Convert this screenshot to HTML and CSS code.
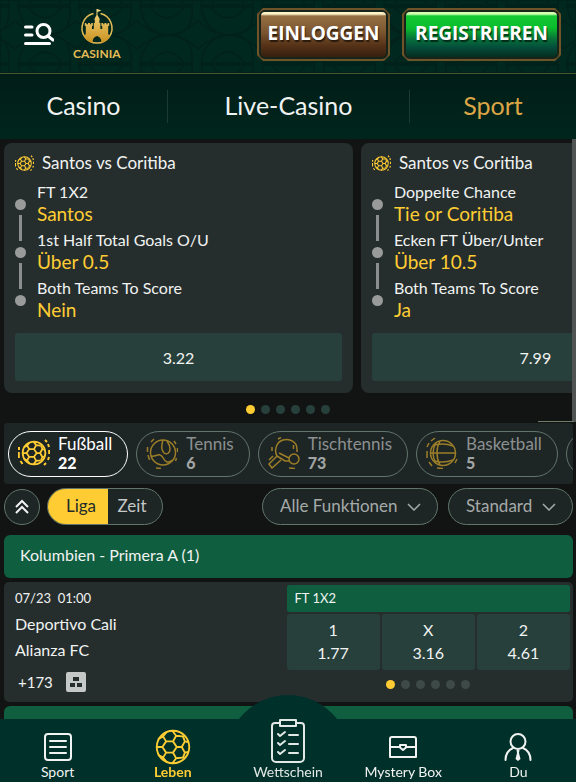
FILE: index.html
```html
<!DOCTYPE html>
<html lang="de">
<head>
  <meta charset="UTF-8" />
  <meta name="viewport" content="width=device-width, initial-scale=1.0"/>
  <title>Casinia Sport</title>
  <link rel="stylesheet" href="styles.css">
</head>
<body>
  <svg class="sprite" aria-hidden="true">
    <symbol id="ball" viewBox="0 0 32 32">
      <circle cx="16" cy="16" r="13"/>
      <path d="M10.5 11.5h5.5l3 4.5-3 4.5h-5.5L7.5 16zM7.5 16H3M10.500 11.500 8 7.500M16 11.500l2.500-4.500M19 16h4M10.500 20.500 8 24.500M16 20.500l2.500 4.500M8 7.500l-3.500 2M8 7.500 11 4M18.500 7 15.500 3M18.500 7l5 .5M8 24.500l-3.500-2M8 24.500l3 3.500M18.500 25l-3 4M18.500 25l5-.5M23 16l2.500-4.500 2.500.5M23 16l2.500 4.500 2.500-.5M25.500 11.500l-1.500-4M25.500 20.500l-1.500 4"/>
    </symbol>
    <symbol id="live-ball" viewBox="0 0 32 32">
      <use href="#ball" x="2" y="2" width="28" height="28"/>
      <path d="M1 10v3M.8 15v6M2.500 24l2 3M27 3l2 2M30 7l1 3M31.200 13v4M31 20l-1 3M28 26l-2 2"/>
    </symbol>
  </svg>

  <header class="header">
    <svg class="pattern" aria-hidden="true">
      <defs>
        <pattern id="arcs" width="61" height="58" patternUnits="userSpaceOnUse" x="137" y="6">
          <path d="M3 1h52q2 28-22 28Q8 29 3 57h52q2-28-22-28Q8 29 3 1zM0 15q30 28 61 0M0 43q30-28 61 0M12 0q18 24 36 0M12 58q18-24 36 0"/>
        </pattern>
      </defs>
      <rect width="100%" height="100%" fill="url(#arcs)"/>
    </svg>
    <button class="menu-btn" aria-label="Menü">
      <svg width="30" height="24" viewBox="0 0 30 24">
        <path d="M1.500 4H8M1.500 12H8M1.500 20.500h24"/>
        <circle cx="19.500" cy="8" r="6.500"/>
        <path d="M24 13l5 4"/>
      </svg>
    </button>
    <a class="logo" href="#">
      <svg width="36" height="36" viewBox="0 0 36 36">
        <defs>
          <linearGradient id="gold" x1="0" y1="0" x2="0" y2="1">
            <stop offset="0" stop-color="#f6d982"/>
            <stop offset="1" stop-color="#c9911f"/>
          </linearGradient>
        </defs>
        <path class="ring" d="M14.500 4.500a15 15 0 1 0 7 0"/>
        <path fill="url(#gold)" d="M17.500 0h.8l4 1.500-3.800 1.500v3l2.500 4.500h-.6V14h1v6h1.800v-3h-.8v-3h1.800v1.300h1.200V14h2v1.300h1.200V14h1.600v3h-1v8l2 2.500a15 15 0 0 1-9 6.500v-2.500q-.5-3.500-4.200-4.500-3.700 1-4.200 4.500V34a15 15 0 0 1-9-6.500l2-2.500v-8h-1v-3h1.600v1.300H9V14h2v1.300h1.200V14h1.600v3h-.8v3h1.800v-6h1v-3.500h-.6L17.500 6z"/>
      </svg>
      <span>CASINIA</span>
    </a>
    <div class="account">
      <button class="btn btn-login"><span>EINLOGGEN</span></button>
      <button class="btn btn-register"><span>REGISTRIEREN</span></button>
    </div>
  </header>

  <nav class="tabs">
    <a href="#">Casino</a>
    <a href="#">Live-Casino</a>
    <a href="#" class="active">Sport</a>
  </nav>

  <main>
    <section class="promo">
      <div class="carousel">
        <article class="card">
          <h2><svg class="icon"><use href="#live-ball"/></svg>Santos vs Coritiba</h2>
          <div class="legs">
            <div class="track"><i></i><b></b><i></i><b></b><i></i></div>
            <dl>
              <dt>FT 1X2</dt><dd>Santos</dd>
              <dt>1st Half Total Goals O/U</dt><dd>Über 0.5</dd>
              <dt>Both Teams To Score</dt><dd>Nein</dd>
            </dl>
          </div>
          <button class="price">3.22</button>
        </article>
        <article class="card">
          <h2><svg class="icon"><use href="#live-ball"/></svg>Santos vs Coritiba</h2>
          <div class="legs">
            <div class="track"><i></i><b></b><i></i><b></b><i></i></div>
            <dl>
              <dt>Doppelte Chance</dt><dd>Tie or Coritiba</dd>
              <dt>Ecken FT Über/Unter</dt><dd>Über 10.5</dd>
              <dt>Both Teams To Score</dt><dd>Ja</dd>
            </dl>
          </div>
          <button class="price">7.99</button>
        </article>
      </div>
      <div class="dots"><i class="on"></i><i></i><i></i><i></i><i></i><i></i></div>
      <div class="scroll-edge"></div>
    </section>

    <div class="sports">
      <button class="chip selected">
        <svg><use href="#live-ball"/></svg>
        <span>Fußball<strong>22</strong></span>
      </button>
      <button class="chip">
        <svg viewBox="0 0 32 32">
          <circle cx="17" cy="15.500" r="12.500"/>
          <path d="M5 19c4 1 6-2 9-1 4 1 3 6 7 7 2 .5 4-1 6-2M17 3c-2 6-2 10 1 13 3 2 6 0 6-4 0-3-1-5-3-8"/>
          <path d="M1.500 10v5M2 18l1.500 5M5 5l3-3M10 31l5 .5M28 4l2 3M31.500 11v4M30.500 21l-1 3"/>
        </svg>
        <span>Tennis<strong>6</strong></span>
      </button>
      <button class="chip">
        <svg viewBox="0 0 32 32">
          <path d="M9 19C6 14 8 5 15 3s14 2 14 9v3M9 19l8 5h4M11 16l10 5M9 19l-8 8 3 4 9-8"/>
          <circle cx="26" cy="22" r="5"/>
          <path d="M4 14v-4M1 23l4-4M10 2l3-1.500M21 31l6 .5M25.500 12V8"/>
        </svg>
        <span>Tischtennis<strong>73</strong></span>
      </button>
      <button class="chip">
        <svg viewBox="0 0 32 32">
          <circle cx="17" cy="16" r="12.500"/>
          <path d="M5 16h24M8 8c8-2 14-1 19 1M8 24c8 2 14 1 19-1M10 6c-4 6-4 14 0 20M14 4c-4 7-4 17 0 24"/>
          <path d="M1 10 3 6M1 14v7M5 4l4-3M3 25l3 4M31 22l-2 4M11 31l6 .5"/>
        </svg>
        <span>Basketball<strong>5</strong></span>
      </button>
      <button class="chip" aria-label="Weitere Sportarten">
        <svg><use href="#ball"/></svg>
      </button>
    </div>

    <div class="filters">
      <button class="collapse" aria-label="Alle einklappen">
        <svg width="16" height="16" viewBox="0 0 16 16"><path d="M2 8l6-6 6 6M2 14l6-6 6 6"/></svg>
      </button>
      <div class="switch">
        <button class="on">Liga</button>
        <button>Zeit</button>
      </div>
      <div class="selects">
        <div class="select">
          <select aria-label="Funktionen"><option>Alle Funktionen</option></select>
          <svg width="14" height="8" viewBox="0 0 14 8"><path d="M1 1l6 6 6-6"/></svg>
        </div>
        <div class="select">
          <select aria-label="Ansicht"><option>Standard</option></select>
          <svg width="14" height="8" viewBox="0 0 14 8"><path d="M1 1l6 6 6-6"/></svg>
        </div>
      </div>
    </div>

    <h3 class="league">Kolumbien - Primera A (1)</h3>
    <article class="match">
      <div class="info">
        <time>07/23&nbsp; 01:00</time>
        <p>Deportivo Cali</p>
        <p>Alianza FC</p>
        <div class="more">
          <a href="#">+173</a>
          <svg width="20" height="20" viewBox="0 0 20 20">
            <rect width="20" height="20" rx="2" fill="#c4c9c8"/>
            <path fill="#252e2d" d="M7 5h6v4H7zM4 11h5v4H4zM11 11h5v4h-5z"/>
          </svg>
        </div>
      </div>
      <div class="market">
        <h4>FT 1X2</h4>
        <div class="odds">
          <button>1<span>1.77</span></button>
          <button>X<span>3.16</span></button>
          <button>2<span>4.61</span></button>
        </div>
        <div class="dots"><i class="on"></i><i></i><i></i><i></i><i></i><i></i></div>
      </div>
    </article>
    <div class="league"></div>
  </main>

  <nav class="bottom-nav">
    <a href="#">
      <svg width="28" height="28" viewBox="0 0 28 28"><rect x="1" y="1" width="26" height="26" rx="3"/><path d="M6 8h16M6 14h16M6 20h16"/></svg>
      Sport
    </a>
    <a href="#" class="active">
      <svg class="ball" width="40" height="40"><use href="#ball"/></svg>
      Leben
    </a>
    <a href="#" class="slip">
      <svg width="34" height="44" viewBox="0 0 34 44">
        <path d="M9 4H4a3 3 0 0 0-3 3v32a4 4 0 0 0 4 4h24a4 4 0 0 0 4-4V7a3 3 0 0 0-3-3h-5M9 1h16v6H9z"/>
        <path d="M7 15l2 2 5-4M18 16h9M7 24l2 2 5-4M18 25h9M7 33l2 2 5-4M18 34h9"/>
      </svg>
      Wettschein
    </a>
    <a href="#">
      <svg width="28" height="28" viewBox="0 0 28 28"><path d="M1 24V6q0-2 2-2h22q2 0 2 2v18zM1 14h9M18 14h9M11 12h6v2.500l-3 2.500-3-2.500z"/></svg>
      Mystery Box
    </a>
    <a href="#">
      <svg width="28" height="28" viewBox="0 0 28 28"><circle cx="14" cy="8.500" r="7.500"/><path d="M1.500 27c0-6 3-10 7.500-12M26.500 27c0-6-3-10-7.500-12"/><path class="tie" d="M12.500 17h3l-.5 3 1.500 6-2.500 2-2.500-2 1.500-6z"/></svg>
      Du
    </a>
  </nav>
</body>
</html>
```

FILE: styles.css
```css
* {
  box-sizing: border-box;
}

body {
  margin: 0;
  background: #111413;
  color: #f1f3f2;
  font-family: Lato, sans-serif;
  font-size: 16px;
  overflow-x: hidden;
}

h2, h3, h4, p, dl, dd {
  margin: 0;
  font-weight: 400;
}

a {
  color: inherit;
  text-decoration: none;
}

button, select {
  font-family: inherit;
  font-size: 16px;
  color: inherit;
  border: none;
  background: none;
  padding: 0;
  cursor: pointer;
}

svg {
  fill: none;
  stroke: currentColor;
  flex-shrink: 0;
}

.sprite {
  position: absolute;
  width: 0;
  height: 0;
}

/* header */
.header {
  position: relative;
  display: flex;
  align-items: center;
  height: 74px;
  padding: 0 15px 4px 24px;
  background: #00281f;
  border-bottom: 1px solid #4a5630;
}

.header > * {
  position: relative;
}

.header .pattern {
  position: absolute;
  left: 0;
  top: 0;
  width: 100%;
  height: 100%;
  stroke: #01221b;
  stroke-width: 2;
}

.menu-btn {
  display: flex;
  color: #fff;
}

.menu-btn svg {
  stroke-width: 3;
  stroke-linecap: round;
}

.logo {
  display: flex;
  flex-direction: column;
  align-items: center;
  margin-left: 19px;
  color: #e6bc56;
  font-size: 12px;
  font-weight: 700;
  line-height: 14px;
}

.logo svg {
  margin-bottom: 2px;
  stroke: none;
}

.logo .ring {
  stroke: #e2bb55;
  stroke-width: 1.5;
}

.account {
  display: flex;
  gap: 12px;
  margin-left: auto;
}

.btn {
  height: 53px;
  padding: 2px;
  background: #6e5428;
  clip-path: polygon(6px 0, calc(100% - 6px) 0, 100% 6px, 100% calc(100% - 6px), calc(100% - 6px) 100%, 6px 100%, 0 calc(100% - 6px), 0 6px);
  font-family: "Open Sans", sans-serif;
  font-size: 19px;
  font-weight: 700;
  color: #fff;
}

.btn span {
  display: flex;
  align-items: center;
  justify-content: center;
  width: 129px;
  height: 100%;
  padding-bottom: 4px;
  border: 2px solid #17241a;
  border-radius: 6px;
  text-shadow: 1px 2px 1px rgba(0, 0, 0, 0.6);
}

.btn-login span {
  background: linear-gradient(#fff3c8 2px, #957044 4px, #7a552f 45%, #553217 75%, #35200f);
}

.btn-register span {
  width: 155px;
  background: linear-gradient(#d4ffb2 2px, #13c832 4px, #09bd2d 35%, #08713a 60%, #044b3a 80%, #062d1f);
}

/* main tabs */
.tabs {
  display: grid;
  grid-template-columns: 29% 42% 29%;
  height: 65px;
  padding: 16px 0;
  background: linear-gradient(#011d17, #00261c);
}

.tabs a {
  display: flex;
  align-items: center;
  justify-content: center;
  padding-bottom: 3px;
  font-size: 25px;
}

.tabs a + a {
  border-left: 1px solid #1c3a32;
}

.tabs .active {
  color: #dca545;
}

/* carousel */
.promo {
  position: relative;
  padding-top: 4px;
}

.carousel {
  display: flex;
  gap: 8px;
  padding-left: 4px;
  overflow: hidden;
}

.card {
  flex: 0 0 61%;
  padding: 10px 11px 12px;
  background: #252e2d;
  border-radius: 8px;
}

.card h2 {
  display: flex;
  align-items: center;
  gap: 8px;
  font-size: 17px;
  line-height: 20px;
}

.icon {
  width: 19px;
  height: 19px;
  color: #ffcd33;
  stroke-width: 2;
}

.legs {
  display: flex;
  gap: 11px;
  margin-top: 8px;
}

.track {
  display: flex;
  flex-direction: column;
  align-items: center;
  padding-top: 18px;
}

.track i {
  width: 11px;
  height: 11px;
  border-radius: 50%;
  background: #999b9b;
}

.track b {
  width: 3px;
  height: 26px;
  margin: 5px 0 6px;
  background: #8c8f8f;
}

.legs dt {
  line-height: 22px;
}

.legs dd {
  margin-bottom: 5px;
  font-size: 19px;
  line-height: 21px;
  color: #ffcd33;
}

.price {
  width: 100%;
  height: 48px;
  margin-top: 8px;
  background: #28403b;
  border-radius: 3px;
}

.dots {
  display: flex;
  justify-content: center;
  gap: 6px;
}

.dots i {
  width: 9px;
  height: 9px;
  border-radius: 50%;
  background: #28403b;
}

.promo .dots {
  padding: 12px 0 9px;
}

.dots .on {
  background: #ffcd33;
}

.scroll-edge {
  position: absolute;
  top: 0;
  right: 0;
  width: 4px;
  height: 283px;
  background: #505554;
}

.scroll-edge::after {
  content: "";
  position: absolute;
  right: 2px;
  bottom: 0;
  width: 36px;
  height: 1px;
  background: #6f7e6d;
}

/* sports */
.sports {
  display: flex;
  gap: 8px;
  margin: 0 3px 0 4px;
  padding: 8px 4px 7px;
  background: #1e2525;
  border-radius: 3px;
  overflow: hidden;
}

.chip {
  display: flex;
  flex-shrink: 0;
  align-items: center;
  gap: 8px;
  height: 46px;
  padding: 0 15px 2px 9px;
  border: 1px solid #61766b;
  border-radius: 23px;
  color: #8b9090;
  font-size: 17px;
  text-align: left;
  line-height: 19px;
}

.chip svg {
  width: 32px;
  height: 32px;
  color: #9c7e29;
  stroke-width: 1.5;
}

.chip strong {
  display: block;
  font-size: 16px;
  font-weight: 900;
  color: #a0a4a3;
}

.chip.selected, .chip.selected strong {
  border-color: #fff;
  color: #fff;
}

.chip.selected svg {
  color: #ffcd33;
  stroke-width: 2;
}

/* filters */
.filters {
  display: flex;
  align-items: center;
  gap: 7px;
  padding: 4px 3px 10px 4px;
}

.collapse {
  display: flex;
  align-items: center;
  justify-content: center;
  width: 36px;
  height: 36px;
  border: 1px solid #61766b;
  border-radius: 50%;
  background: #1e2525;
}

.collapse svg {
  stroke-width: 2;
}

.switch {
  display: flex;
  height: 37px;
  border: 1px solid #61766b;
  border-radius: 19px;
  background: #1e2525;
  overflow: hidden;
}

.switch button {
  width: 54px;
  padding: 0 6px 2px 0;
  font-size: 17px;
  color: #c4c8c7;
}

.switch .on {
  width: 60px;
  padding: 0 0 2px 6px;
  background: #ffcd33;
  color: #222b29;
}

.selects {
  display: flex;
  gap: 10px;
  margin-left: auto;
}

.select {
  position: relative;
  height: 37px;
}

.select select {
  appearance: none;
  height: 37px;
  padding: 0 39px 2px 17px;
  border: 1px solid #61766b;
  border-radius: 19px;
  background: #1e2525;
  color: #a5aaa9;
  font-size: 17px;
}

.select svg {
  position: absolute;
  right: 17px;
  top: 15px;
  color: #a5aaa9;
  stroke-width: 1.5;
  pointer-events: none;
}

/* league and match */
.league {
  height: 43px;
  margin: 0 3px 4px 4px;
  padding-left: 16px;
  background: #0f5e3f;
  border-radius: 6px;
  font-size: 16px;
  line-height: 40px;
}

.match {
  display: grid;
  grid-template-columns: 1fr 1fr;
  margin: 0 3px 4px 4px;
  height: 120px;
  padding: 3px 3px 0 11px;
  background: #252e2d;
  border-radius: 5px;
}

.info time {
  display: block;
  font-size: 13px;
  line-height: 26px;
}

.info p {
  line-height: 26px;
}

.more {
  display: flex;
  align-items: center;
  gap: 13px;
  height: 38px;
  padding-left: 3px;
}

.more a {
  font-size: 15px;
}

.more svg {
  stroke: none;
}

.market {
  margin-left: -6px;
}

.market h4 {
  padding-left: 8px;
  background: #0f5e3f;
  border-radius: 2px;
  font-size: 13px;
  line-height: 27px;
}

.odds {
  display: grid;
  grid-template-columns: 1fr 1fr 1fr;
  gap: 2px;
  margin: 2px 0 10px;
}

.odds button {
  height: 56px;
  padding-bottom: 2px;
  background: #28403b;
  border-radius: 3px;
  line-height: 23px;
}

.odds span {
  display: block;
}

.market .dots i:not(.on) {
  background: #3e4a47;
}

/* bottom navigation */
.bottom-nav {
  position: fixed;
  left: 0;
  right: 0;
  bottom: 0;
  display: grid;
  grid-template-columns: repeat(5, 1fr);
  height: 63px;
  background: #00302a;
}

.bottom-nav::before {
  content: "";
  position: absolute;
  left: 50%;
  top: -24px;
  width: 124px;
  height: 87px;
  border-radius: 62px 62px 0 0;
  background: #00302a;
  transform: translateX(-50%);
  clip-path: inset(0 0 63px 0);
}

.bottom-nav a {
  position: relative;
  display: flex;
  flex-direction: column;
  align-items: center;
  justify-content: flex-end;
  gap: 3px;
  height: 63px;
  font-size: 14px;
  line-height: 16px;
  padding-bottom: 2px;
}

.bottom-nav svg {
  stroke-width: 2;
  stroke-linejoin: round;
  stroke-linecap: round;
}

.bottom-nav .ball {
  margin-bottom: -6px;
  stroke-width: 1.5;
}

.bottom-nav .active {
  color: #ffcd33;
  font-weight: 700;
}

.bottom-nav .slip {
  gap: 1px;
  color: #e2e8e6;
}

.bottom-nav .tie {
  fill: currentColor;
  stroke: none;
}
```
